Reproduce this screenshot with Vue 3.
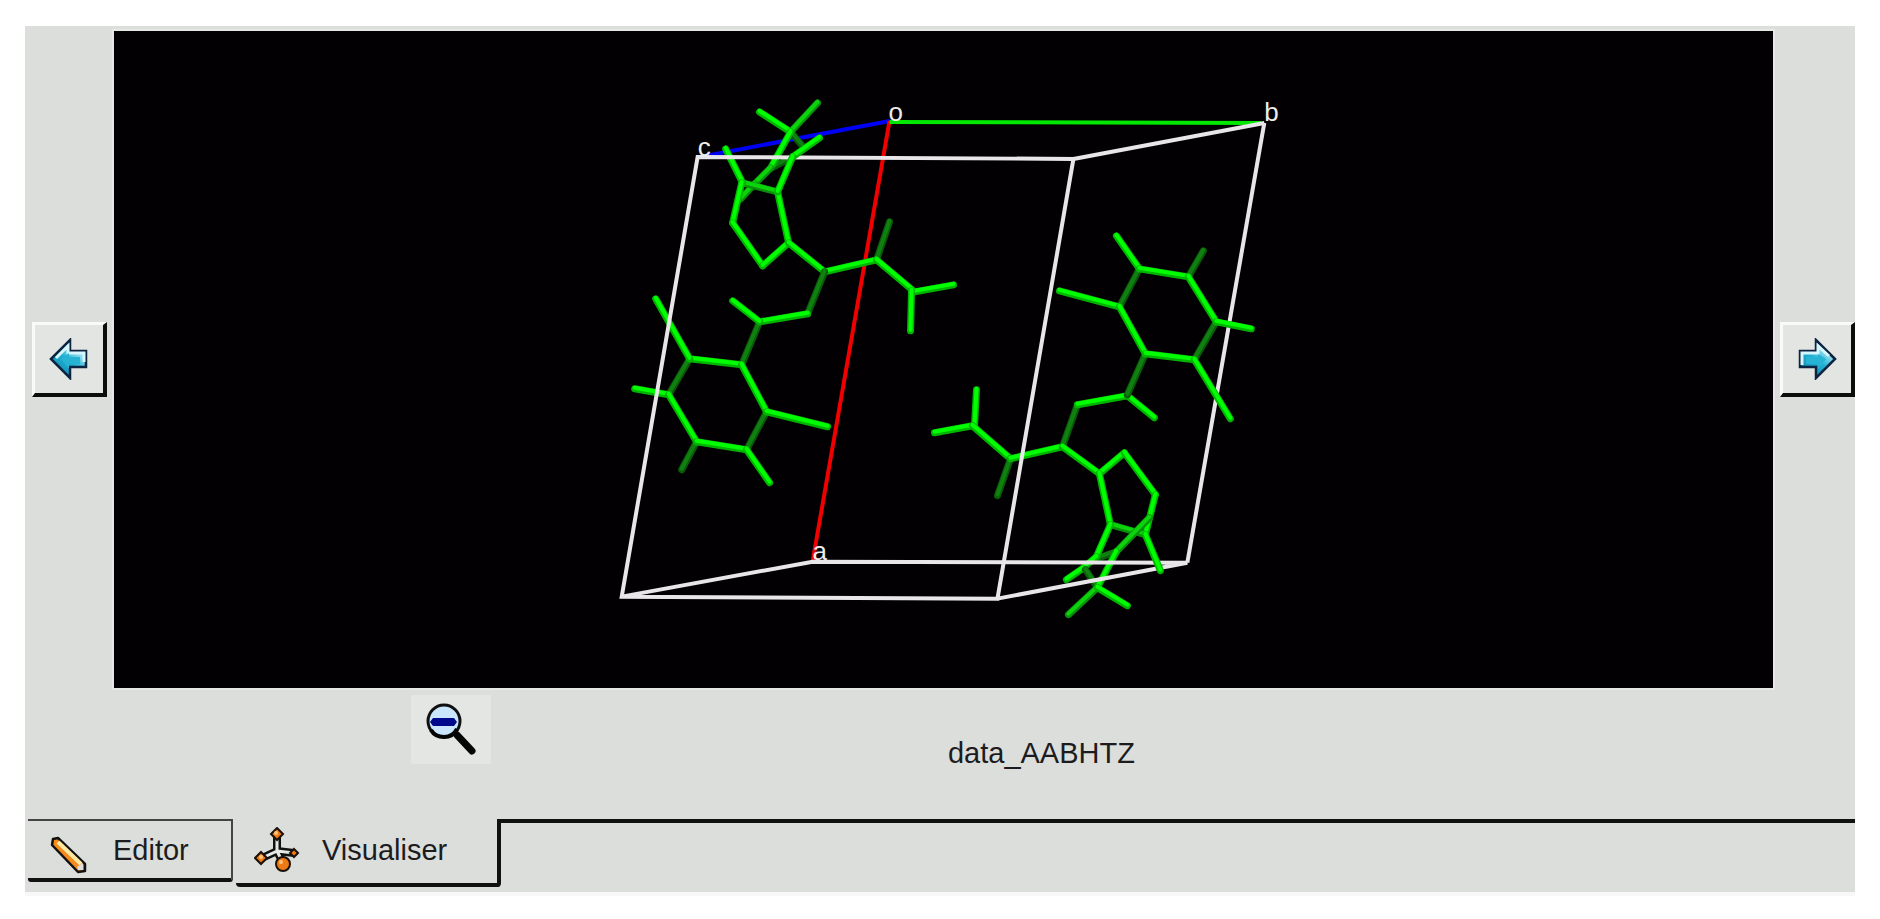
<script setup>
import { ref } from 'vue'

const tab = ref('visualiser')

// Bonds are [x1, y1, x2, y2, shade]; shade 1 is a bond turned away from the light.
const bonds = [
  [791, 132, 802, 145, 1], [793, 157, 772, 168, 1],
  [791, 132, 818, 103, 2], [760, 112, 791, 132, 0],
  [791, 132, 771, 168, 0], [771, 168, 755, 184, 2], [755, 184, 741, 199, 2],
  [778, 192, 743, 183, 2], [743, 183, 726, 149, 0],
  [742, 183, 733, 223, 0], [733, 223, 763, 266, 0], [763, 266, 789, 243, 0],
  [789, 243, 778, 192, 0], [789, 243, 825, 272, 0],
  [877, 260, 890, 222, 1], [825, 272, 877, 260, 0], [877, 260, 915, 292, 0],
  [915, 292, 954, 285, 0], [912, 291, 911, 331, 0],
  [825, 272, 808, 314, 1], [808, 314, 760, 322, 0], [760, 322, 742, 365, 1],
  [760, 322, 733, 301, 0],
  [690, 359, 669, 395, 1], [767, 412, 747, 450, 1], [697, 442, 682, 470, 1],
  [742, 365, 690, 359, 0], [690, 359, 656, 299, 0], [669, 395, 635, 389, 0],
  [669, 395, 697, 442, 0], [697, 442, 747, 450, 0], [747, 450, 770, 483, 0],
  [742, 365, 767, 412, 0], [767, 412, 828, 427, 0],

  [977, 390, 975, 426, 0], [935, 433, 973, 426, 0], [973, 426, 1011, 459, 0],
  [1011, 459, 998, 496, 1], [1011, 459, 1063, 447, 0], [1063, 447, 1078, 405, 1],
  [1078, 405, 1128, 396, 0], [1128, 396, 1155, 418, 0], [1063, 447, 1100, 474, 0],
  [1100, 474, 1125, 453, 0], [1125, 453, 1156, 495, 0], [1156, 495, 1146, 535, 0],
  [1100, 474, 1111, 525, 0], [1111, 525, 1146, 535, 2], [1117, 552, 1097, 559, 1],
  [1111, 525, 1097, 557, 0], [1097, 557, 1083, 569, 0], [1083, 569, 1067, 580, 0],
  [1086, 570, 1098, 588, 1], [1150, 518, 1117, 552, 2], [1117, 552, 1098, 588, 0],
  [1098, 588, 1069, 615, 2], [1098, 588, 1128, 606, 0],
  [1146, 354, 1128, 395, 1], [1140, 269, 1120, 307, 1], [1217, 322, 1195, 360, 1],
  [1189, 277, 1204, 251, 1], [1060, 291, 1120, 307, 0], [1117, 236, 1140, 269, 0],
  [1140, 269, 1189, 277, 0], [1189, 277, 1217, 322, 0], [1217, 322, 1252, 329, 0],
  [1120, 307, 1146, 354, 0], [1146, 354, 1195, 360, 0], [1195, 360, 1231, 419, 0],
]
const frontBonds = [
  [793, 157, 820, 138, 0], [778, 192, 793, 157, 0], [1146, 535, 1161, 571, 0],
]
const shades = ['lit', 'dim', 'mid']
</script>

<template>
  <main class="panel">
    <div class="viewer">
      <button class="nav prev" type="button" aria-label="Previous structure">
        <svg width="40" height="42" viewBox="0 0 40 42">
          <defs>
            <linearGradient id="aqua" x1="1" y1="0" x2="0.3" y2="1">
              <stop offset="0" stop-color="#e8fbff" />
              <stop offset="0.35" stop-color="#8fdcf0" />
              <stop offset="0.6" stop-color="#1fb0d2" />
              <stop offset="1" stop-color="#1289b0" />
            </linearGradient>
          </defs>
          <path d="M2 21 21 2V13H37V29H21V40Z" fill="url(#aqua)" stroke="#0d2440" stroke-width="2.5" />
          <path d="M7 20 19 8V15H35V24" fill="none" stroke="#d6f6fd" stroke-width="3" />
          <path d="M12 21 20 15V19H31V26H20V31Z" fill="#27b3d3" />
        </svg>
      </button>

      <svg class="stage" viewBox="114 31 1660 657" role="img" aria-label="Unit cell">
        <g fill="none" stroke-width="4">
          <path d="M890 121 700 157" stroke="#0000f5" />
          <path d="M890 121 813 562" stroke="#f00000" />
          <path d="M890 122 1262 123" stroke="#00e800" />
          <path d="M1265 123 1188 563" class="edge" />
        </g>
        <g v-for="(b, i) in bonds" :key="'b' + i" :class="shades[b[4]]">
          <line class="shadow" :x1="b[0]" :y1="b[1]" :x2="b[2]" :y2="b[3]" />
          <line class="shine" :x1="b[0]" :y1="b[1] - 1" :x2="b[2]" :y2="b[3] - 1" />
        </g>
        <path class="edge" d="M698 157 622 597 998 599 1074 159ZM1074 159 1265 123M622 597 813 562 1188 563 998 599" />
        <g v-for="(b, i) in frontBonds" :key="'f' + i" :class="shades[b[4]]">
          <line class="shadow" :x1="b[0]" :y1="b[1]" :x2="b[2]" :y2="b[3]" />
          <line class="shine" :x1="b[0]" :y1="b[1] - 1" :x2="b[2]" :y2="b[3] - 1" />
        </g>
        <g class="axis">
          <text x="889" y="121">o</text>
          <text x="1265" y="121">b</text>
          <text x="698" y="156">c</text>
          <text x="813" y="560">a</text>
        </g>
      </svg>

      <button class="nav next" type="button" aria-label="Next structure">
        <svg width="40" height="42" viewBox="0 0 40 42">
          <path d="M38 21 19 2V13H3V29H19V40Z" fill="url(#aqua)" stroke="#0d2440" stroke-width="2.5" />
          <path d="M5 27V15H21V8L32 18" fill="none" stroke="#d6f6fd" stroke-width="3" />
          <path d="M29 21 21 16V19H9V26H21V31Z" fill="#27b3d3" />
        </svg>
      </button>

      <div class="caption">
        <button class="zoom" type="button" aria-label="Zoom out">
          <svg width="50" height="54" viewBox="0 0 50 54">
            <path d="M31 33 46 49" stroke="#050505" stroke-width="7" stroke-linecap="round" />
            <circle cx="18" cy="19" r="16" fill="#c9e6fc" stroke="#101010" stroke-width="3" />
            <path d="M5 28Q9 35 18 35T31 27" fill="none" stroke="#050505" stroke-width="4" />
            <path d="M4 20 7 16H28L31 20 28 24H7Z" fill="#00088c" />
          </svg>
        </button>
        <output class="name">data_AABHTZ</output>
      </div>
    </div>

    <nav class="tabs" role="tablist">
      <button class="tab editor" type="button" role="tab" :aria-selected="tab === 'editor'" @click="tab = 'editor'">
        <svg width="38" height="38" viewBox="0 0 38 38">
          <path d="M3 3 8 2 35 28V35L28 36 2 9Z" fill="#f58a1e" stroke="#111" stroke-width="2.5" stroke-linejoin="round" />
          <path d="M8 6 31 28" stroke="#ffe9a0" stroke-width="4" />
          <path d="M28 34 27 31 33 27V34Z" fill="#ddd" />
        </svg>
        <span>Editor</span>
      </button>
      <button class="tab visualiser" type="button" role="tab" :aria-selected="tab === 'visualiser'" @click="tab = 'visualiser'">
        <svg width="46" height="46" viewBox="0 0 46 46">
          <path d="M23 10V24L8 31M23 24 40 26M23 24 29 36" fill="none" stroke="#111" stroke-width="8" />
          <path d="M23 10V24L8 31M23 24 40 26M23 24 29 36" fill="none" stroke="#e6e8e6" stroke-width="3" />
          <g fill="#ee7a16" stroke="#1a1008" stroke-width="2">
            <path d="M23 1 29 7 23 13 17 7Z" />
            <path d="M7 25 13 31 7 37 1 31Z" />
            <path d="M40 22 44 26 40 30 36 26Z" />
            <circle cx="29" cy="37" r="7" />
          </g>
          <g fill="#ffc27a">
            <circle cx="22" cy="6" r="2" />
            <circle cx="7" cy="30" r="2" />
            <circle cx="27" cy="35" r="2" />
          </g>
        </svg>
        <span>Visualiser</span>
      </button>
      <div class="rest"></div>
    </nav>
  </main>
</template>

<style>
body {
  background: #fff;
}
</style>

<style scoped>
.panel {
  margin: 26px 25px 0;
  padding-top: 5px;
  background: #dcdedc;
  border-bottom: 4px solid #f8f8f8;
  font-family: "Liberation Sans", Arial, sans-serif;
  color: #1c1c1e;
}
button {
  font: inherit;
  color: inherit;
  margin: 0;
  cursor: pointer;
}
.viewer {
  display: grid;
  grid-template-columns: 89px 1fr 82px;
  align-items: center;
}
.stage {
  display: block;
  width: 100%;
  height: auto;
  background: #020003;
  box-shadow: 0 0 0 2px #e6e8e6;
}
.nav {
  box-sizing: border-box;
  width: 75px;
  height: 75px;
  padding: 0;
  display: flex;
  align-items: center;
  justify-content: center;
  background: #e3e5e2;
  border: solid;
  border-width: 3px 4px 4px 3px;
  border-color: #fafafa #0c0c0c #0c0c0c #fafafa;
}
.prev {
  margin-left: 7px;
}
.next {
  justify-self: end;
}
.edge {
  fill: none;
  stroke: #e8e6e8;
  stroke-width: 4;
}
.shadow,
.shine {
  stroke-linecap: round;
}
.shadow {
  stroke-width: 7;
}
.shine {
  stroke-width: 4;
}
.lit .shadow {
  stroke: #00b400;
}
.lit .shine {
  stroke: #00ff00;
}
.mid .shadow {
  stroke: #089008;
}
.mid .shine {
  stroke: #0cd40c;
}
.dim .shadow {
  stroke: #085c08;
}
.dim .shine {
  stroke: #108010;
}
.axis {
  fill: #ececec;
  font-size: 26px;
}
.caption {
  grid-column: 2;
  display: grid;
  grid-template-columns: 674fr 508fr 478fr;
  justify-items: center;
  align-items: start;
  height: 131px;
}
.zoom {
  width: 80px;
  height: 69px;
  margin-top: 7px;
  padding: 0;
  border: 0;
  background: #e4e6e3;
  display: flex;
  align-items: center;
  justify-content: center;
}
.name {
  margin-top: 48px;
  font-size: 29px;
  line-height: 34px;
}
.tabs {
  display: flex;
  align-items: flex-start;
  height: 73px;
  padding-left: 3px;
}
.tab {
  box-sizing: border-box;
  display: flex;
  align-items: center;
  background: none;
  border: 0 solid #111;
  font-size: 29px;
  line-height: 34px;
}
.editor {
  width: 205px;
  height: 63px;
  padding: 2px 0 0 22px;
  gap: 25px;
  border-width: 2px 2px 4px 0;
  border-top-color: #444;
  border-right-color: #444;
  border-radius: 0 0 3px 3px;
}
.editor svg {
  margin-top: 10px;
}
.visualiser {
  width: 265px;
  height: 68px;
  margin-left: 3px;
  padding: 0 0 2px 18px;
  gap: 22px;
  border-width: 0 4px 4px 0;
  border-radius: 0 0 4px 4px;
}
.rest {
  flex: 1;
  border-top: 4px solid #111;
}
</style>
